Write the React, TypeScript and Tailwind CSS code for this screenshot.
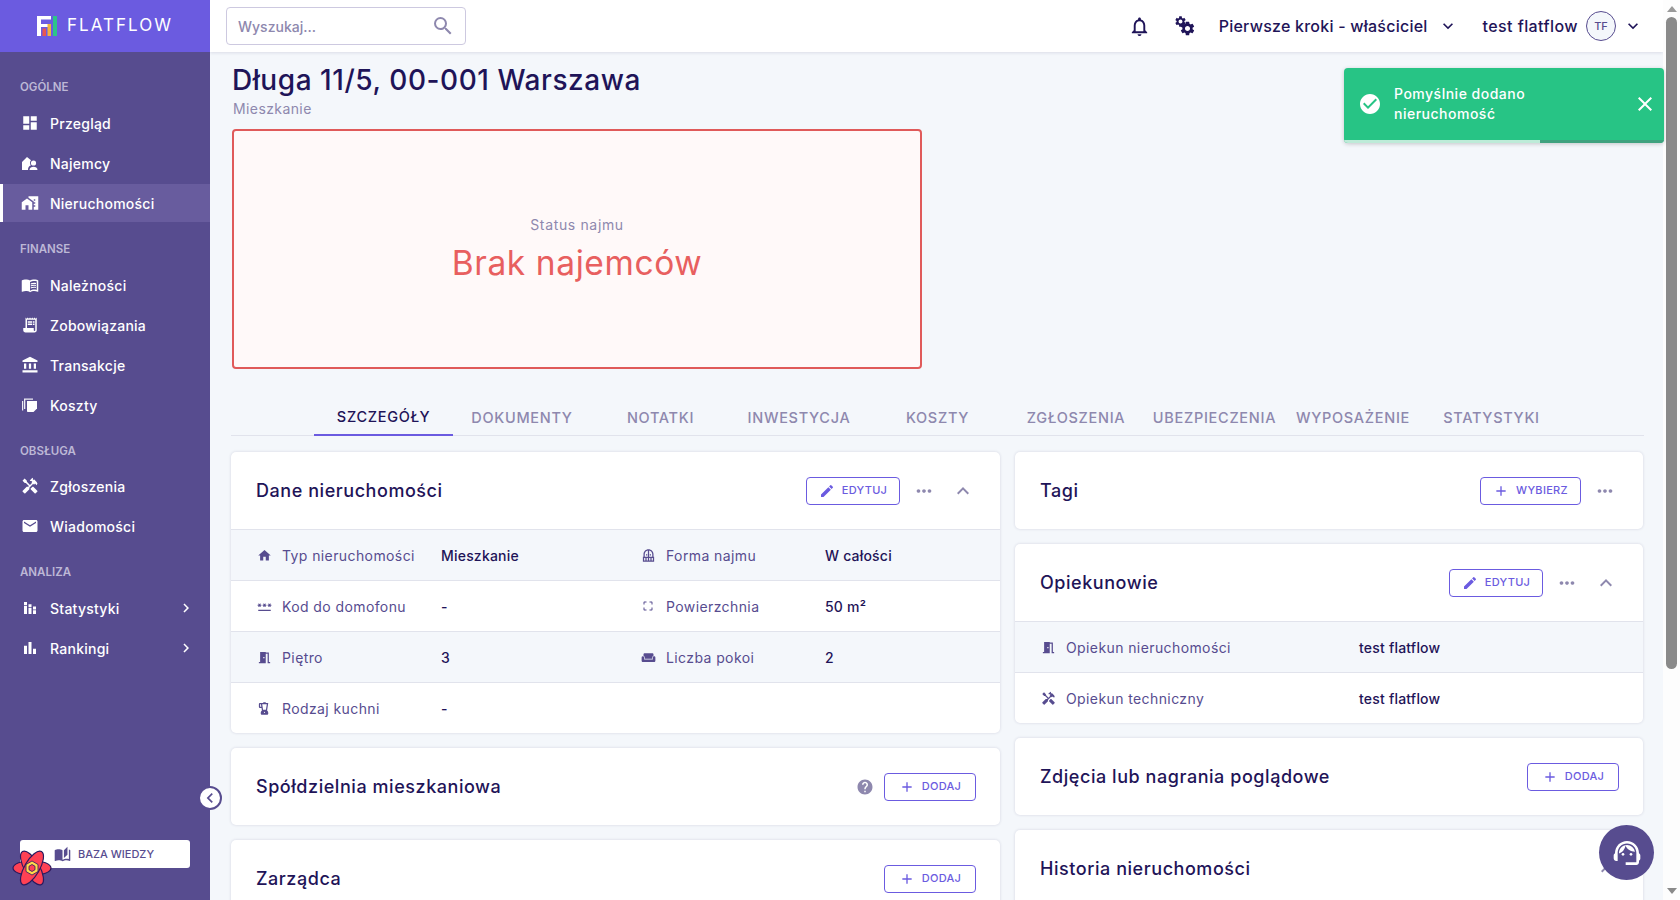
import type { ReactNode } from 'react';
import {
  MdAccountBalance,
  MdAutoStories,
  MdBalcony,
  MdBarChart,
  MdBlender,
  MdCheckCircle,
  MdChevronLeft,
  MdChevronRight,
  MdClose,
  MdCropFree,
  MdDashboard,
  MdEdit,
  MdEmail,
  MdExpandLess,
  MdExpandMore,
  MdHandyman,
  MdHelp,
  MdHome,
  MdHomeWork,
  MdAdd,
  MdMeetingRoom,
  MdMenuBook,
  MdMoreHoriz,
  MdOutlineNotifications,
  MdPassword,
  MdReceiptLong,
  MdSearch,
  MdSettings,
  MdStackedBarChart,
  MdSupportAgent,
  MdWeekend,
} from 'react-icons/md';

function LogoMark() {
  return (
    <svg width="20" height="20" viewBox="0 0 20 20">
      <path d="M0 0h14v3.5H4v4.5h9v3H4v9H0z" fill="#fff" />
      <rect x="5.5" y="12.5" width="3.5" height="7.5" fill="#e8574f" />
      <rect x="10.5" y="8" width="3.5" height="12" fill="#f2b33d" />
      <rect x="16" y="0" width="4" height="20" fill="#2cc489" />
    </svg>
  );
}

function TenantIcon() {
  return (
    <svg width="18" height="18" viewBox="0 0 18 18" fill="#fff">
      <path d="M1 16V8l5-5 4 3.2A4 4 0 0 0 9 9a4 4 0 0 0 .8 2.4C8 12 7 13.400 7 16z" />
      <circle cx="12.500" cy="9" r="2.600" />
      <path d="M8.500 16c0-2 2-3.200 4-3.200s4 1.200 4 3.200z" />
    </svg>
  );
}

function CostsIcon() {
  return (
    <svg width="18" height="18" viewBox="0 0 18 18" fill="#fff">
      <path d="M3 2.500h9v1.300H4.300V13H3z" opacity="0.9" />
      <path d="M6 5h10v7.500L12.500 16H6.800A.8.800 0 0 1 6 15.200z" />
      <path d="M1 5h1.200v9.500H1z" opacity="0.9" />
    </svg>
  );
}

function AtomLogo() {
  return (
    <svg width="40" height="38" viewBox="0 0 40 38">
      <g fill="#ff4154" stroke="#2a1a5e" strokeWidth="1.200">
        <ellipse cx="20" cy="19" rx="19" ry="7.500" />
        <ellipse cx="20" cy="19" rx="19" ry="7.500" transform="rotate(60 20 19)" />
        <ellipse cx="20" cy="19" rx="19" ry="7.500" transform="rotate(120 20 19)" />
      </g>
      <path d="M20 12l6 3.500v7L20 26l-6-3.500v-7z" fill="#ffd94c" stroke="#2a1a5e" strokeWidth="0.800" />
      <path d="M20 15.500l3 1.750v3.500L20 22.500l-3-1.750v-3.500z" fill="#ff4154" stroke="#2a1a5e" strokeWidth="0.800" />
    </svg>
  );
}

function NavItem({ icon, label, active, more }: { icon: ReactNode; label: string; active?: boolean; more?: boolean }) {
  return (
    <div
      className={`flex h-[38px] mb-[2px] items-center pr-[15px] text-[14px] font-medium tracking-[0.25px] text-white ${
        active ? 'bg-[#685c9e] border-l-[3px] border-white pl-[18px]' : 'pl-[21px]'
      }`}
    >
      <span className="flex w-[29px] shrink-0 items-center text-[18px]">{icon}</span>
      <span className="flex-1">{label}</span>
      {more && <MdChevronRight className="text-[18px]" />}
    </div>
  );
}

function NavLabel({ children, tight }: { children: ReactNode; tight?: boolean }) {
  return (
    <div className={`h-8 ${tight ? 'mb-[9px]' : 'mb-[10px]'} pt-[17px] pl-5 text-[11.500px] font-semibold leading-4 text-[#bdb8d6]`}>
      {children}
    </div>
  );
}

function Sidebar() {
  return (
    <aside className="relative flex w-[210px] shrink-0 flex-col bg-[#574c8f]">
      <div className="flex h-[52px] items-center justify-center gap-[10px] bg-[#6b5be0]">
        <LogoMark />
        <span className="text-[17px] font-normal tracking-[2px] text-white">FLATFLOW</span>
      </div>
      <nav className="pt-[10px]">
        <NavLabel>OGÓLNE</NavLabel>
        <NavItem icon={<MdDashboard />} label="Przegląd" />
        <NavItem icon={<TenantIcon />} label="Najemcy" />
        <NavItem icon={<MdHomeWork />} label="Nieruchomości" active />
        <NavLabel>FINANSE</NavLabel>
        <NavItem icon={<MdMenuBook />} label="Należności" />
        <NavItem icon={<MdReceiptLong />} label="Zobowiązania" />
        <NavItem icon={<MdAccountBalance />} label="Transakcje" />
        <NavItem icon={<CostsIcon />} label="Koszty" />
        <NavLabel tight>OBSŁUGA</NavLabel>
        <NavItem icon={<MdHandyman />} label="Zgłoszenia" />
        <NavItem icon={<MdEmail />} label="Wiadomości" />
        <NavLabel>ANALIZA</NavLabel>
        <NavItem icon={<MdStackedBarChart />} label="Statystyki" more />
        <NavItem icon={<MdBarChart />} label="Rankingi" more />
      </nav>
      <div className="mt-auto mb-8 ml-5 flex h-7 w-[170px] items-center justify-center gap-[7px] rounded-[3px] bg-white pr-[2px] text-[11px] font-medium text-[#574c8f]">
        <MdAutoStories className="text-[17px]" />
        BAZA WIEDZY
      </div>
      <div className="absolute left-[198px] top-[786px] flex h-6 w-6 items-center justify-center rounded-full border-2 border-[#574c8f] bg-white text-[#574c8f]">
        <MdChevronLeft className="text-[20px]" />
      </div>
      <div className="absolute left-3 top-[849px]">
        <AtomLogo />
      </div>
    </aside>
  );
}

function Topbar() {
  return (
    <header className="flex h-[52px] shrink-0 items-center bg-white pl-4 pr-[20px] shadow-[0_1px_3px_rgba(40,30,90,0.12)] text-[#1f1458]">
      <div className="flex h-[38px] w-[240px] items-center justify-between rounded-[4px] border border-[#cdc9e0] pl-[11px] pr-[10px] text-[14px] font-medium text-[#8e88ae]">
        <span>Wyszukaj...</span>
        <MdSearch className="text-[24px]" />
      </div>
      <div className="ml-auto flex items-center">
        <MdOutlineNotifications className="text-[23px]" />
        <span className="relative ml-[23px] block h-[22px] w-[22px]">
          <MdSettings className="absolute left-0 top-0 text-[13px]" />
          <MdSettings className="absolute bottom-0 right-0 text-[17px]" />
        </span>
        <span className="ml-[23px] text-[16px] font-medium tracking-[0.23px]">Pierwsze kroki - właściciel</span>
        <MdExpandMore className="ml-[10px] text-[20px]" />
        <span className="ml-[25px] text-[16px] font-medium tracking-[0.42px]">test flatflow</span>
        <span className="ml-2 flex h-[30px] w-[30px] items-center justify-center rounded-full border border-[#574c8f] bg-[#f4f7fb] text-[11px] font-medium text-[#574c8f]">
          TF
        </span>
        <MdExpandMore className="ml-[7px] text-[20px]" />
      </div>
    </header>
  );
}

function OutlineButton({ icon, label, width }: { icon: ReactNode; label: string; width: string }) {
  return (
    <div
      className={`flex h-7 ${width} items-center justify-center gap-[7px] rounded-[4px] border border-[#6b5be0] bg-white text-[11px] font-medium tracking-[0.3px] text-[#6b5be0]`}
    >
      <span className="text-[16px]">{icon}</span>
      {label}
    </div>
  );
}

function CardHeader({ title, children }: { title: string; children?: ReactNode }) {
  return (
    <div className="flex h-[77px] items-center justify-between pl-[25px] pr-6">
      <h3 className="text-[18px] font-medium tracking-[0.55px] text-[#1f1458]">{title}</h3>
      <div className="flex items-center">{children}</div>
    </div>
  );
}

function Card({ children }: { children: ReactNode }) {
  return <section className="rounded-[5px] bg-white shadow-[0_0_3px_rgba(40,30,90,0.16)]">{children}</section>;
}

function Cell({ icon, label, value, labelWidth, width = 'w-[384px]' }: { icon?: ReactNode; label?: string; value?: string; labelWidth?: string; width?: string }) {
  return (
    <div className={`flex ${width} items-center pl-[25px]`}>
      {label && (
        <>
          <span className="flex w-[16px] justify-center text-[15px] text-[#574c8f]">{icon}</span>
          <span className={`ml-[10px] ${labelWidth} text-[14px] tracking-[0.4px] text-[#574c8f]`}>{label}</span>
          <span className="text-[14px] font-medium tracking-[0.2px] text-[#1f1458]">{value}</span>
        </>
      )}
    </div>
  );
}

function Row({ alt, children }: { alt?: boolean; children: ReactNode }) {
  return <div className={`flex h-[51px] border-t border-[#e1e3ec] ${alt ? 'bg-[#f4f7fb]' : ''}`}>{children}</div>;
}

function Dots() {
  return <MdMoreHoriz className="text-[22px] text-[#8e88ae]" />;
}

function Chevron() {
  return <MdExpandLess className="text-[24px] text-[#8e88ae]" />;
}

const tabs = ['SZCZEGÓŁY', 'DOKUMENTY', 'NOTATKI', 'INWESTYCJA', 'KOSZTY', 'ZGŁOSZENIA', 'UBEZPIECZENIA', 'WYPOSAŻENIE', 'STATYSTYKI'];

function Tabs() {
  return (
    <div className="mt-[28px] flex h-[39px] justify-center border-b border-[#e1e3ec]">
      {tabs.map((t, i) => (
        <div
          key={t}
          className={`flex h-[39px] w-[138.500px] items-center justify-center pt-[2px] text-[14.500px] font-medium tracking-[0.7px] ${
            i === 0 ? 'border-b-2 border-[#6b5be0] text-[#1f1458]' : 'text-[#8e88ae]'
          }`}
        >
          {t}
        </div>
      ))}
    </div>
  );
}

function LeftColumn() {
  return (
    <div className="flex flex-col gap-[15px]">
      <Card>
        <CardHeader title="Dane nieruchomości">
          <OutlineButton icon={<MdEdit />} label="EDYTUJ" width="w-[94px]" />
          <span className="ml-[13px]"><Dots /></span>
          <span className="ml-[16px] mr-[1px]"><Chevron /></span>
        </CardHeader>
        <Row alt>
          <Cell icon={<MdHome />} label="Typ nieruchomości" value="Mieszkanie" labelWidth="w-[159px]" />
          <Cell icon={<MdBalcony />} label="Forma najmu" value="W całości" labelWidth="w-[159px]" />
        </Row>
        <Row>
          <Cell icon={<MdPassword />} label="Kod do domofonu" value="-" labelWidth="w-[159px]" />
          <Cell icon={<MdCropFree className="text-[12px]" />} label="Powierzchnia" value="50 m²" labelWidth="w-[159px]" />
        </Row>
        <Row alt>
          <Cell icon={<MdMeetingRoom />} label="Piętro" value="3" labelWidth="w-[159px]" />
          <Cell icon={<MdWeekend />} label="Liczba pokoi" value="2" labelWidth="w-[159px]" />
        </Row>
        <Row>
          <Cell icon={<MdBlender />} label="Rodzaj kuchni" value="-" labelWidth="w-[159px]" />
          <Cell />
        </Row>
      </Card>
      <Card>
        <CardHeader title="Spółdzielnia mieszkaniowa">
          <MdHelp className="mr-[10px] text-[18px] text-[#8e88ae]" />
          <OutlineButton icon={<MdAdd />} label="DODAJ" width="w-[92px]" />
        </CardHeader>
      </Card>
      <Card>
        <CardHeader title="Zarządca">
          <OutlineButton icon={<MdAdd />} label="DODAJ" width="w-[92px]" />
        </CardHeader>
      </Card>
    </div>
  );
}

function RightColumn() {
  return (
    <div className="flex flex-col gap-[15px]">
      <Card>
        <CardHeader title="Tagi">
          <OutlineButton icon={<MdAdd />} label="WYBIERZ" width="w-[101px]" />
          <span className="ml-[13px]"><Dots /></span>
          <span className="w-[3px]" />
        </CardHeader>
      </Card>
      <Card>
        <CardHeader title="Opiekunowie">
          <OutlineButton icon={<MdEdit />} label="EDYTUJ" width="w-[94px]" />
          <span className="ml-[13px]"><Dots /></span>
          <span className="ml-[16px] mr-[1px]"><Chevron /></span>
        </CardHeader>
        <Row alt>
          <Cell icon={<MdMeetingRoom />} label="Opiekun nieruchomości" value="test flatflow" labelWidth="w-[293px]" width="w-full" />
        </Row>
        <Row>
          <Cell icon={<MdHandyman />} label="Opiekun techniczny" value="test flatflow" labelWidth="w-[293px]" width="w-full" />
        </Row>
      </Card>
      <Card>
        <CardHeader title="Zdjęcia lub nagrania poglądowe">
          <OutlineButton icon={<MdAdd />} label="DODAJ" width="w-[92px]" />
        </CardHeader>
      </Card>
      <Card>
        <CardHeader title="Historia nieruchomości">
          <Chevron />
        </CardHeader>
      </Card>
    </div>
  );
}

function Toast() {
  return (
    <div className="absolute left-[1344px] top-[68px] flex h-[75px] w-[320px] flex-col overflow-hidden rounded-[4px] bg-[#27c485] text-white shadow-[0_1px_4px_rgba(0,0,0,0.2)]">
      <div className="flex flex-1 items-center pl-[14px] pr-[7px]">
        <MdCheckCircle className="text-[24px]" />
        <span className="ml-[12px] flex-1 text-[14px] font-medium leading-[20px] tracking-[0.5px]">
          Pomyślnie dodano
          <br />
          nieruchomość
        </span>
        <MdClose className="text-[24px]" />
      </div>
      <div className="flex h-[3px]">
        <div className="w-[196px] bg-[#bdebd8]" />
        <div className="flex-1 bg-[#3fa27f]" />
      </div>
    </div>
  );
}

export default function App() {
  return (
    <div className="relative flex h-[900px] w-[1680px] overflow-hidden bg-[#f4f7fb] [font-family:Inter,'Noto_Sans',sans-serif]">
      <Sidebar />
      <div className="flex min-w-0 flex-1 flex-col">
        <Topbar />
        <main className="min-h-0 flex-1 overflow-hidden pl-[21px] pr-[19px]">
          <h1 className="mt-[10px] pl-[1px] text-[28px] font-medium leading-9 tracking-[0.55px] text-[#1f1458]">Długa 11/5, 00-001 Warszawa</h1>
          <p className="mt-[1px] pl-[2px] text-[14px] leading-5 tracking-[0.4px] text-[#8e88ae]">Mieszkanie</p>
          <div className="ml-[1px] mt-[10px] flex h-[240px] w-[690px] flex-col items-center justify-center rounded-[4px] border-2 border-[#e05a5a] bg-[#fff9f9] pt-[4px]">
            <span className="text-[14px] tracking-[0.65px] text-[#8e88ae]">Status najmu</span>
            <span className="mt-[3px] text-[33.500px] font-normal tracking-[0.6px] text-[#e85f5f]">Brak najemców</span>
          </div>
          <Tabs />
          <div className="mt-[16px] grid grid-cols-[769px_628px] gap-[15px] items-start">
            <LeftColumn />
            <RightColumn />
          </div>
        </main>
      </div>
      <div className="flex w-[17px] shrink-0 flex-col items-center bg-[#fdfdfd]">
        <div className="mt-[6px] h-0 w-0 border-x-[5px] border-b-[6px] border-x-transparent border-b-[#9a9a9a]" />
        <div className="mt-[5px] h-[652px] w-[11px] rounded-full bg-[#8a8a8a]" />
        <div className="mb-[6px] mt-auto h-0 w-0 border-x-[5px] border-t-[6px] border-x-transparent border-t-[#8a8a8a]" />
      </div>
      <Toast />
      <div className="absolute left-[1599px] top-[825px] flex h-[55px] w-[55px] items-center justify-center rounded-full bg-[#574c8f] text-white">
        <MdSupportAgent className="text-[32px]" />
      </div>
    </div>
  );
}
